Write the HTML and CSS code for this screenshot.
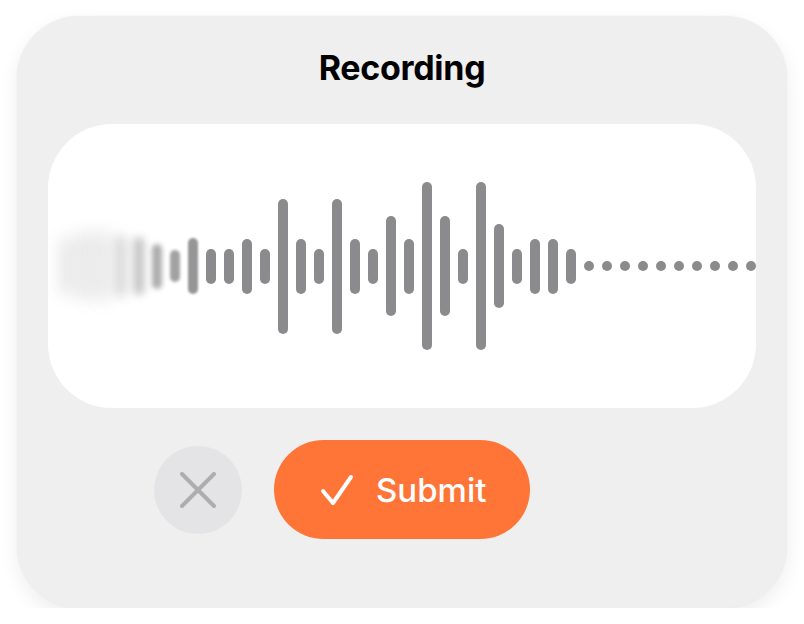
FILE: index.html
```html
<!DOCTYPE html>
<html lang="en">
<head>
<meta charset="utf-8">
<title>Recording</title>
<link rel="stylesheet" href="styles.css">
</head>
<body>
<div class="card">
  <h1 class="title">Recording</h1>
  <div class="wave-panel">
    <div class="wave">
      <span class="bar blur-6" style="height:58px"></span>
      <span class="bar blur-6" style="height:70px"></span>
      <span class="bar blur-6" style="height:70px"></span>
      <span class="bar blur-5" style="height:62px"></span>
      <span class="bar blur-4" style="height:58px"></span>
      <span class="bar blur-3" style="height:45px"></span>
      <span class="bar blur-2" style="height:32px"></span>
      <span class="bar blur-1" style="height:56px"></span>
      <span class="bar blur-0" style="height:35px"></span>
      <span class="bar" style="height:35px"></span>
      <span class="bar" style="height:55px"></span>
      <span class="bar" style="height:35px"></span>
      <span class="bar" style="height:135px"></span>
      <span class="bar" style="height:55px"></span>
      <span class="bar" style="height:35px"></span>
      <span class="bar" style="height:135px"></span>
      <span class="bar" style="height:55px"></span>
      <span class="bar" style="height:35px"></span>
      <span class="bar" style="height:100px"></span>
      <span class="bar" style="height:55px"></span>
      <span class="bar" style="height:168px"></span>
      <span class="bar" style="height:100px"></span>
      <span class="bar" style="height:35px"></span>
      <span class="bar" style="height:168px"></span>
      <span class="bar" style="height:84px"></span>
      <span class="bar" style="height:35px"></span>
      <span class="bar" style="height:55px"></span>
      <span class="bar" style="height:55px"></span>
      <span class="bar" style="height:35px"></span>
      <span class="dot"></span>
      <span class="dot"></span>
      <span class="dot"></span>
      <span class="dot"></span>
      <span class="dot"></span>
      <span class="dot"></span>
      <span class="dot"></span>
      <span class="dot"></span>
      <span class="dot"></span>
      <span class="dot"></span>
    </div>
  </div>
  <div class="actions">
    <button class="cancel" aria-label="Cancel">
      <svg width="36" height="36" viewBox="0 0 36 36" fill="none" stroke="currentColor" stroke-width="4" stroke-linecap="round">
        <path d="M2 2 L34 34 M34 2 L2 34"/>
      </svg>
    </button>
    <button class="submit">
      <svg class="check" width="34" height="32" viewBox="0 0 34 32" fill="none" stroke="currentColor" stroke-width="4" stroke-linecap="round" stroke-linejoin="round">
        <path d="M3 17 L13 29 L31 3"/>
      </svg>
      <span>Submit</span>
    </button>
  </div>
</div>
</body>
</html>
```

FILE: styles.css
```css
* { box-sizing: border-box; }

html, body {
  margin: 0;
  padding: 0;
  background: #ffffff;
}

body {
  font-family: Inter, "Noto Sans", "Liberation Sans", sans-serif;
  padding: 16px 17px 0 17px;
}

.card {
  width: 770px;
  height: 592px;
  background: #efefef;
  border-radius: 62px;
  box-shadow: 0 8px 20px rgba(0, 0, 0, 0.07), 0 0 2px rgba(0, 0, 0, 0.06);
  padding: 32px 31px 0 31px;
  display: flex;
  flex-direction: column;
}

.title {
  margin: 0;
  height: 40px;
  line-height: 40px;
  text-align: center;
  font-size: 34px;
  font-weight: 700;
  color: #000;
  letter-spacing: -0.3px;
}

.wave-panel {
  margin-top: 36px;
  height: 284px;
  background: #ffffff;
  border-radius: 64px;
  overflow: hidden;
  display: flex;
  align-items: center;
  padding-left: 14px;
}

.wave {
  display: flex;
  align-items: center;
  gap: 8px;
}

.bar {
  flex: none;
  width: 10px;
  border-radius: 5px;
  background: #8b8b8d;
}

.dot {
  flex: none;
  width: 10px;
  height: 10px;
  border-radius: 50%;
  background: #8b8b8d;
}

.blur-0 { filter: blur(0.6px); }
.blur-1 { filter: blur(1px); opacity: 0.9; }
.blur-2 { filter: blur(1.8px); opacity: 0.8; }
.blur-3 { filter: blur(2.5px); opacity: 0.7; }
.blur-4 { filter: blur(4px); opacity: 0.55; }
.blur-5 { filter: blur(6px); opacity: 0.4; }
.blur-6 { filter: blur(8px); opacity: 0.3; }

.actions {
  margin-top: 32px;
  padding-left: 106px;
  display: flex;
  align-items: center;
  gap: 32px;
}

button {
  font-family: inherit;
  border: none;
  cursor: pointer;
}

.cancel {
  width: 88px;
  height: 88px;
  border-radius: 50%;
  background: #e4e4e6;
  color: #adadb0;
  display: flex;
  align-items: center;
  justify-content: center;
  padding: 0;
}

.submit {
  width: 256px;
  height: 99px;
  border-radius: 50px;
  background: #ff7538;
  color: #ffffff;
  display: flex;
  align-items: center;
  padding: 0 0 0 46px;
  gap: 22px;
  font-size: 33px;
  font-weight: 500;
}

.check {
  flex: none;
}
```
